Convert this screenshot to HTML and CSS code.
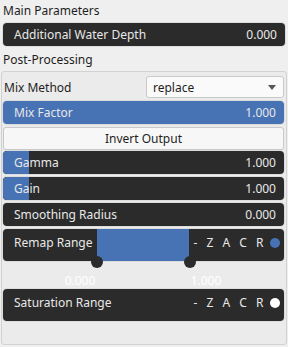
FILE: index.html
```html
<!DOCTYPE html>
<html lang="en">
<head>
    <meta charset="UTF-8">
    <meta name="viewport" content="width=device-width, initial-scale=1.0">
    <title>Parameters</title>
    <link rel="stylesheet" href="styles.css">
</head>
<body>

<div class="title">Main Parameters</div>
<div class="field">
    <span>Additional Water Depth</span>
    <span>0.000</span>
</div>

<div class="title">Post-Processing</div>
<div class="panel">
    <div class="combo-row">
        <span class="combo-label">Mix Method</span>
        <div class="combo">
            <span>replace</span>
            <svg width="8" height="5" viewBox="0 0 8 5"><path d="M0 0h8L4 5z" fill="#555"/></svg>
        </div>
    </div>

    <div class="field full">
        <span>Mix Factor</span>
        <span>1.000</span>
    </div>

    <div class="button">Invert Output</div>

    <div class="field">
        <div class="fill" style="width: 26px"></div>
        <span>Gamma</span>
        <span>1.000</span>
    </div>
    <div class="field">
        <div class="fill" style="width: 26px"></div>
        <span>Gain</span>
        <span>1.000</span>
    </div>
    <div class="field">
        <span>Smoothing Radius</span>
        <span>0.000</span>
    </div>

    <div class="range-wrap">
        <div class="field range">
            <div class="range-fill" style="left: 94px; width: 92px"></div>
            <span>Remap Range</span>
            <div class="flags">- Z A C R <i class="dot blue"></i></div>
        </div>
        <div class="handle" style="left: 95px"></div>
        <div class="handle" style="left: 188px"></div>
        <div class="handle-label" style="left: 78px">0.000</div>
        <div class="handle-label" style="left: 204px">1.000</div>
    </div>

    <div class="field range">
        <span>Saturation Range</span>
        <div class="flags">- Z A C R <i class="dot white"></i></div>
    </div>
</div>

</body>
</html>
```

FILE: styles.css
```css
body {
    margin: 0;
    width: 288px;
    height: 347px;
    background: #efefef;
    font-family: 'Noto Sans', sans-serif;
    font-size: 12px;
    color: #1e1e1e;
    overflow: hidden;
}

.title {
    height: 22px;
    line-height: 22px;
    padding-left: 3px;
}

.field {
    position: relative;
    display: flex;
    justify-content: space-between;
    align-items: center;
    height: 23px;
    margin: 1px 3px 3px 3px;
    padding: 0 8px 0 11px;
    background: #2b2b2b;
    color: #e8e8e8;
    border-radius: 4px;
    box-shadow: 0 0 0 1px #dcdcdc;
    overflow: hidden;
}

.panel .field {
    margin: 1px 2px 3px 1px;
}

.field span {
    position: relative;
}

.field.full {
    background: #4772b3;
}

.fill {
    position: absolute;
    left: 0;
    top: 0;
    bottom: 0;
    background: #4772b3;
    border-radius: 4px 0 0 4px;
}

.panel {
    margin: 0 1px;
    height: 272px;
    background: #ebebeb;
    border: 1px solid #d2d2d2;
    border-radius: 3px;
}

.combo-row {
    display: flex;
    align-items: center;
    height: 26px;
    margin: 2px 2px 0 2px;
}

.combo-label {
    width: 142px;
}

.combo {
    flex: 1;
    display: flex;
    justify-content: space-between;
    align-items: center;
    height: 20px;
    padding: 0 7px 0 6px;
    background: #fafafa;
    border: 1px solid #c9c9c9;
    border-radius: 3px;
}

.button {
    height: 21px;
    line-height: 21px;
    margin: 0 2px 1px 1px;
    text-align: center;
    background: #f7f7f7;
    border: 1px solid #c9c9c9;
    border-radius: 3px;
}

.range-wrap {
    position: relative;
    height: 59px;
}

.field.range {
    height: 32px;
    align-items: flex-start;
    padding-top: 5px;
    box-sizing: border-box;
}

.range-fill {
    position: absolute;
    top: 0;
    bottom: 0;
    background: #4772b3;
}

.flags {
    position: relative;
    display: flex;
    align-items: center;
    margin-right: -4px;
    word-spacing: 5px;
    letter-spacing: 0.5px;
}

.dot {
    display: inline-block;
    width: 10px;
    height: 10px;
    margin-left: 6px;
    border-radius: 50%;
}

.dot.blue {
    background: #4772b3;
}

.dot.white {
    background: #ffffff;
}

.handle {
    position: absolute;
    top: 27px;
    width: 12px;
    height: 12px;
    margin-left: -6px;
    border-radius: 50%;
    background: #2b2b2b;
}

.handle-label {
    position: absolute;
    top: 43px;
    width: 40px;
    margin-left: -20px;
    text-align: center;
    color: #ffffff;
}
```
